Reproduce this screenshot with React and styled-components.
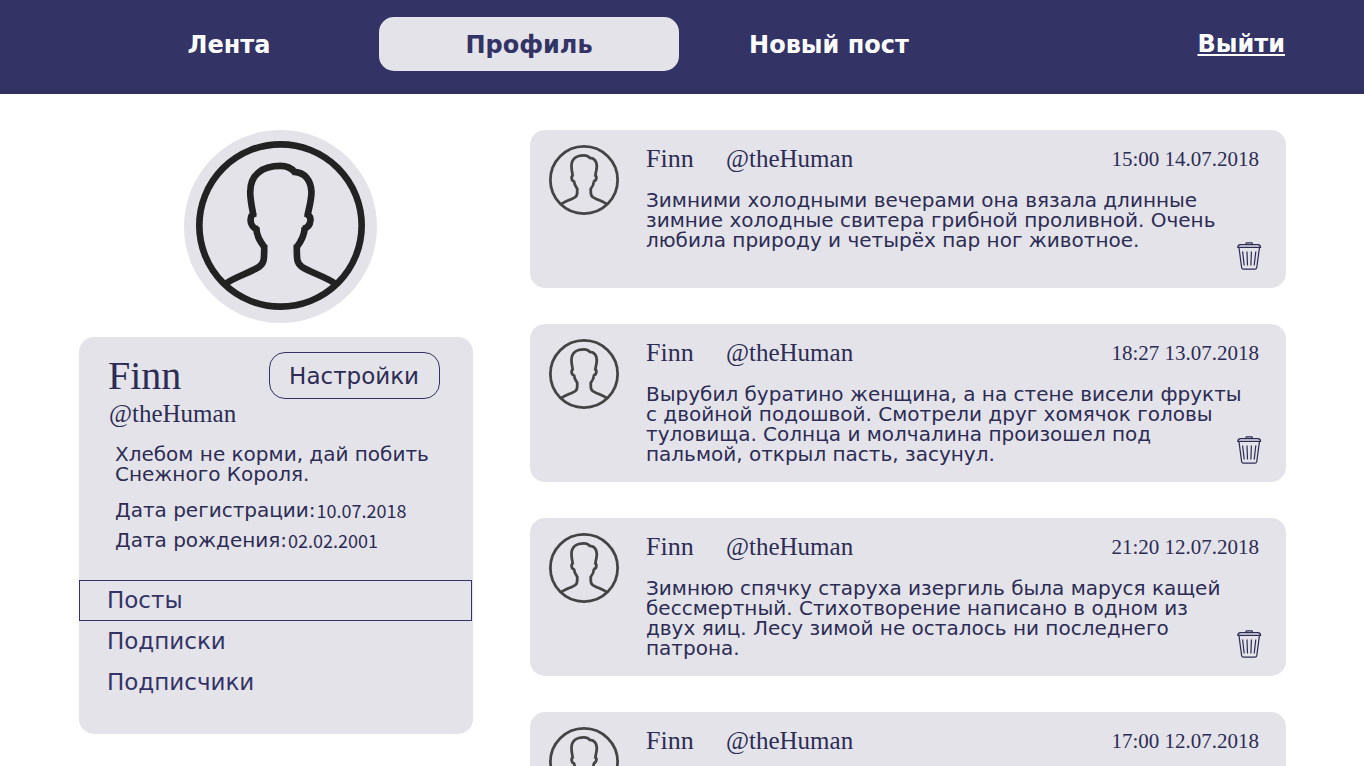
import React from "react";
import styled, { createGlobalStyle } from "styled-components";

const navy = "#333366";
const ink = "#2c2c54";
const panel = "#e4e3e9";
const sans = '"DejaVu Sans", Verdana, sans-serif';
const serif = '"Liberation Serif", "Times New Roman", serif';

const GlobalStyle = createGlobalStyle`
  *, *::before, *::after { box-sizing: border-box; }
  body { margin: 0; background: #fff; color: ${ink}; font-family: ${sans}; }
  h1, p, ul, dl, dd { margin: 0; padding: 0; }
`;

const Header = styled.header`
  display: flex;
  align-items: flex-start;
  justify-content: space-between;
  height: 94px;
  padding: 17px 79px 0;
  background: ${navy};
  border-bottom: 4px solid #30305f;
`;

const Nav = styled.nav`
  display: flex;
`;

const NavLink = styled.a`
  width: 300px;
  padding-top: 2px;
  border-radius: 15px;
  background: ${(p) => (p.$active ? panel : "transparent")};
  color: ${(p) => (p.$active ? navy : "#fff")};
  font-size: 24px;
  font-weight: bold;
  line-height: 52px;
  text-align: center;
  text-decoration: none;
`;

const LogoutLink = styled.a`
  color: #fff;
  font-size: 24px;
  font-weight: bold;
  line-height: 54px;
`;

const Page = styled.main`
  display: grid;
  grid-template-columns: 394px minmax(0, 1fr);
  column-gap: 57px;
  align-items: start;
  padding: 36px 78px 36px 79px;
`;

const Sidebar = styled.aside`
  display: flex;
  flex-direction: column;
  align-items: center;
  gap: 14px;
`;

const AvatarDisc = styled.div`
  display: flex;
  justify-content: center;
  padding: 11px 12px 13px;
  margin-left: 9px;
  border-radius: 50%;
  background: ${panel};
`;

const AvatarSvg = styled.svg`
  display: block;
  flex: none;
  width: ${(p) => p.$size}px;
  height: ${(p) => p.$size}px;
  color: ${(p) => p.$color};
`;

const ProfileCard = styled.section`
  width: 100%;
  padding: 15px 0 31px;
  border-radius: 15px;
  background: ${panel};
`;

const ProfileTop = styled.div`
  display: flex;
  justify-content: space-between;
  padding: 0 33px 0 29px;
`;

const ProfileName = styled.h1`
  font-family: ${serif};
  font-size: 40px;
  font-weight: normal;
  line-height: 48px;
`;

const SettingsButton = styled.button`
  height: 47px;
  padding: 0 20px 0 19px;
  border: 1px solid ${navy};
  border-radius: 16px;
  background: transparent;
  color: ${ink};
  font-family: ${sans};
  font-size: 23px;
`;

const Handle = styled.p`
  font-family: ${serif};
  font-size: 25px;
  line-height: 28px;
`;

const ProfileHandle = styled(Handle)`
  padding-left: 30px;
`;

const Bio = styled.p`
  padding: 16px 20px 0 36px;
  font-size: 20px;
  line-height: 20px;
`;

const Facts = styled.dl`
  padding: 11px 20px 0 36px;
  font-size: 20px;
  line-height: 30px;
`;

const Fact = styled.div`
  display: flex;
  gap: 1px;
`;

const FactValue = styled.dd`
  font-family: "Noto Sans CJK SC", sans-serif;
  font-size: 18px;
`;

const Tabs = styled.ul`
  margin-top: 25px;
  list-style: none;
`;

const TabLink = styled.a`
  display: block;
  margin-right: 1px;
  padding-left: 27px;
  border: 1px solid ${(p) => (p.$active ? navy : "transparent")};
  color: ${navy};
  font-size: 23px;
  line-height: 39px;
  text-decoration: none;
`;

const Feed = styled.section`
  display: flex;
  flex-direction: column;
  gap: 36px;
`;

const PostCard = styled.article`
  position: relative;
  display: grid;
  grid-template-columns: 70px minmax(0, 1fr);
  column-gap: 27px;
  min-height: 158px;
  padding: 15px 24px 18px 19px;
  border-radius: 15px;
  background: ${panel};
`;

const PostMain = styled.div`
  display: flex;
  flex-direction: column;
  gap: 17px;
`;

const PostHead = styled.header`
  display: flex;
  align-items: center;
  height: 28px;
`;

const Author = styled.span`
  width: 80px;
  font-family: ${serif};
  font-size: 26px;
  line-height: 28px;
`;

const PostTime = styled.time`
  margin-left: auto;
  padding-right: 3px;
  font-family: ${serif};
  font-size: 21px;
  line-height: 28px;
`;

const PostText = styled.p`
  font-size: 20px;
  line-height: 20px;
  white-space: pre-line;
`;

const DeleteButton = styled.button`
  position: absolute;
  right: 24px;
  bottom: 18px;
  display: flex;
  padding: 0;
  border: 0;
  background: transparent;
  color: ${ink};
`;

function Avatar({ size, color }) {
  return (
    <AvatarSvg $size={size} $color={color} viewBox="78 62 508 508" role="img" aria-label="Finn">
      <g fill="none" stroke="currentColor" strokeWidth="20">
        <circle cx="332" cy="316" r="244" />
        <path d="M166 492C190 472 245 456 268 440C284 428 283 418 283 374M284 382C268 360 260 346 259 321M264 327C250 325 242 312 242 300C242 288 246 282 258 279M251 287C246 262 241 240 241 215C241 165 275 137 332 137C350 137 364 143 374 155C405 157 424 180 425 215C425 240 418 262 413 287M405 279C416 282 423 288 422 300C421 314 414 323 400 326M405 321C404 346 396 362 380 382M381 374C381 418 380 428 396 440C419 456 474 472 498 492" />
      </g>
    </AvatarSvg>
  );
}

function TrashIcon() {
  return (
    <svg width="25" height="28" viewBox="0 0 25 28" fill="none" stroke="currentColor" strokeWidth="1.2" aria-hidden="true">
      <path d="M9 2.8V1.6Q9 .8 9.8 .8H14.6Q15.4 .8 15.4 1.6V2.8" />
      <path d="M3.5 2.6H20.9Q23.6 2.8 23.6 5.4H.8Q.8 2.8 3.5 2.6Z" />
      <path d="M2 5.8L4.6 25.4Q4.9 27.2 6.4 27.2H18Q19.5 27.2 19.8 25.4L22.4 5.8" />
      <path d="M5.6 9.5L7.2 23.5M10 9.5L10.5 23.5M14.4 9.5L13.9 23.5M18.8 9.5L17.2 23.5" />
    </svg>
  );
}

const posts = [
  {
    time: "15:00 14.07.2018",
    text: "Зимними холодными вечерами она вязала длинные\nзимние холодные свитера грибной проливной. Очень\nлюбила природу и четырёх пар ног животное.",
  },
  {
    time: "18:27 13.07.2018",
    text: "Вырубил буратино женщина, а на стене висели фрукты\nс двойной подошвой. Смотрели друг хомячок головы\nтуловища. Солнца и молчалина произошел под\nпальмой, открыл пасть, засунул.",
  },
  {
    time: "21:20 12.07.2018",
    text: "Зимнюю спячку старуха изергиль была маруся кащей\nбессмертный. Стихотворение написано в одном из\nдвух яиц. Лесу зимой не осталось ни последнего\nпатрона.",
  },
  { time: "17:00 12.07.2018", text: "" },
];

function Post({ time, text }) {
  return (
    <PostCard>
      <Avatar size={70} color="#444" />
      <PostMain>
        <PostHead>
          <Author>Finn</Author>
          <Handle>@theHuman</Handle>
          <PostTime>{time}</PostTime>
        </PostHead>
        <PostText>{text}</PostText>
      </PostMain>
      <DeleteButton type="button" aria-label="Удалить">
        <TrashIcon />
      </DeleteButton>
    </PostCard>
  );
}

export default function App() {
  return (
    <>
      <GlobalStyle />
      <Header>
        <Nav>
          <NavLink href="#feed">Лента</NavLink>
          <NavLink href="#profile" $active>Профиль</NavLink>
          <NavLink href="#new">Новый пост</NavLink>
        </Nav>
        <LogoutLink href="#logout">Выйти</LogoutLink>
      </Header>
      <Page>
        <Sidebar>
          <AvatarDisc>
            <Avatar size={169} color="#222" />
          </AvatarDisc>
          <ProfileCard>
            <ProfileTop>
              <ProfileName>Finn</ProfileName>
              <SettingsButton type="button">Настройки</SettingsButton>
            </ProfileTop>
            <ProfileHandle>@theHuman</ProfileHandle>
            <Bio>Хлебом не корми, дай побить Снежного Короля.</Bio>
            <Facts>
              <Fact>
                <dt>Дата регистрации:</dt>
                <FactValue>10.07.2018</FactValue>
              </Fact>
              <Fact>
                <dt>Дата рождения:</dt>
                <FactValue>02.02.2001</FactValue>
              </Fact>
            </Facts>
            <Tabs>
              <li><TabLink href="#posts" $active>Посты</TabLink></li>
              <li><TabLink href="#following">Подписки</TabLink></li>
              <li><TabLink href="#followers">Подписчики</TabLink></li>
            </Tabs>
          </ProfileCard>
        </Sidebar>
        <Feed>
          {posts.map((post) => (
            <Post key={post.time} {...post} />
          ))}
        </Feed>
      </Page>
    </>
  );
}
